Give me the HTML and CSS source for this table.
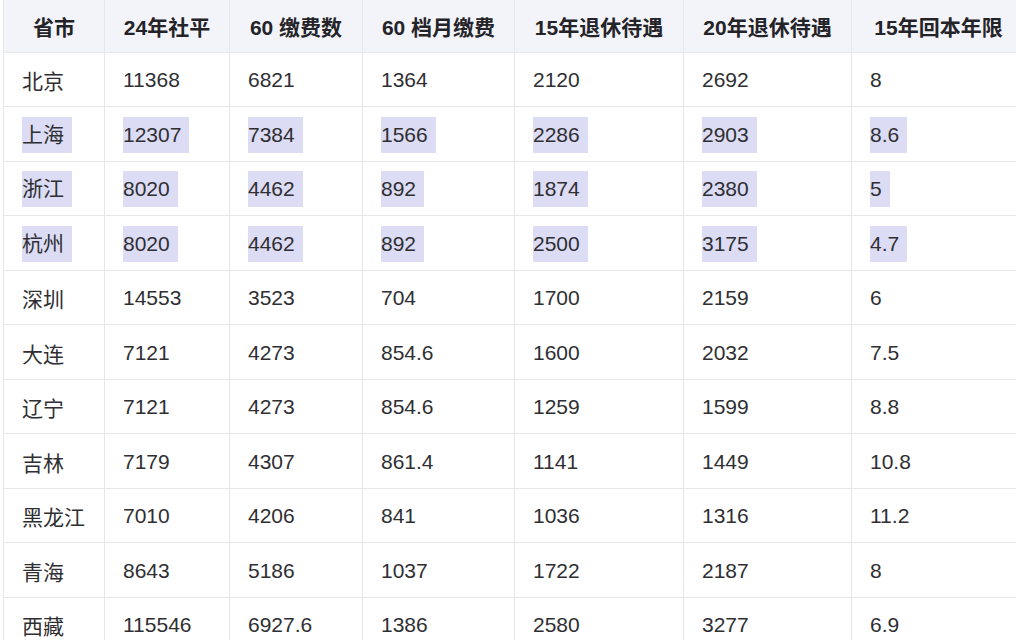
FILE: index.html
```html
<!DOCTYPE html>
<html lang="zh">
<head>
<meta charset="utf-8">
<link rel="stylesheet" href="styles.css">
</head>
<body>
<table class="grid">
  <colgroup>
    <col class="c1"><col class="c2"><col class="c3"><col class="c4"><col class="c5"><col class="c6"><col class="c7">
  </colgroup>
  <thead>
    <tr><th>省市</th><th>24年社平</th><th>60 缴费数</th><th>60 档月缴费</th><th>15年退休待遇</th><th>20年退休待遇</th><th>15年回本年限</th></tr>
  </thead>
  <tbody>
    <tr><td>北京</td><td>11368</td><td>6821</td><td>1364</td><td>2120</td><td>2692</td><td>8</td></tr>
    <tr class="sel"><td><span>上海</span></td><td><span>12307</span></td><td><span>7384</span></td><td><span>1566</span></td><td><span>2286</span></td><td><span>2903</span></td><td><span>8.6</span></td></tr>
    <tr class="sel"><td><span>浙江</span></td><td><span>8020</span></td><td><span>4462</span></td><td><span>892</span></td><td><span>1874</span></td><td><span>2380</span></td><td><span>5</span></td></tr>
    <tr class="sel"><td><span>杭州</span></td><td><span>8020</span></td><td><span>4462</span></td><td><span>892</span></td><td><span>2500</span></td><td><span>3175</span></td><td><span>4.7</span></td></tr>
    <tr><td>深圳</td><td>14553</td><td>3523</td><td>704</td><td>1700</td><td>2159</td><td>6</td></tr>
    <tr><td>大连</td><td>7121</td><td>4273</td><td>854.6</td><td>1600</td><td>2032</td><td>7.5</td></tr>
    <tr><td>辽宁</td><td>7121</td><td>4273</td><td>854.6</td><td>1259</td><td>1599</td><td>8.8</td></tr>
    <tr><td>吉林</td><td>7179</td><td>4307</td><td>861.4</td><td>1141</td><td>1449</td><td>10.8</td></tr>
    <tr><td>黑龙江</td><td>7010</td><td>4206</td><td>841</td><td>1036</td><td>1316</td><td>11.2</td></tr>
    <tr><td>青海</td><td>8643</td><td>5186</td><td>1037</td><td>1722</td><td>2187</td><td>8</td></tr>
    <tr><td>西藏</td><td>115546</td><td>6927.6</td><td>1386</td><td>2580</td><td>3277</td><td>6.9</td></tr>
  </tbody>
</table>
</body>
</html>
```
FILE: styles.css
```css
html, body {
  margin: 0;
  padding: 0;
  background: #ffffff;
  overflow: hidden;
  width: 1016px;
  height: 640px;
}
body {
  padding-left: 3px;
  font-family: "Liberation Sans", "Noto Sans CJK SC", sans-serif;
  color: #2f2f33;
}
.grid {
  border-collapse: collapse;
  table-layout: fixed;
  width: 1022px;
}
.c1 { width: 101px; }
.c2 { width: 125px; }
.c3 { width: 133px; }
.c4 { width: 152px; }
.c5 { width: 169px; }
.c6 { width: 168px; }
.c7 { width: 174px; }
.grid th, .grid td {
  border: 1px solid #e6e6ec;
  padding: 0 0 0 18px;
  vertical-align: middle;
  white-space: nowrap;
  overflow: hidden;
}
.grid thead tr { height: 52px; }
.grid th {
  background: #f3f3fa;
  border-top: none;
  font-size: 21px;
  font-weight: bold;
  text-align: center;
  padding: 0;
  color: #242428;
}
.grid tbody tr { height: 54.5px; }
.grid td {
  font-size: 21px;
  text-align: left;
  padding-top: 2px;
}
.sel span {
  display: inline-block;
  line-height: 36px;
  padding-right: 8px;
  background: #dcdcf4;
}
```
